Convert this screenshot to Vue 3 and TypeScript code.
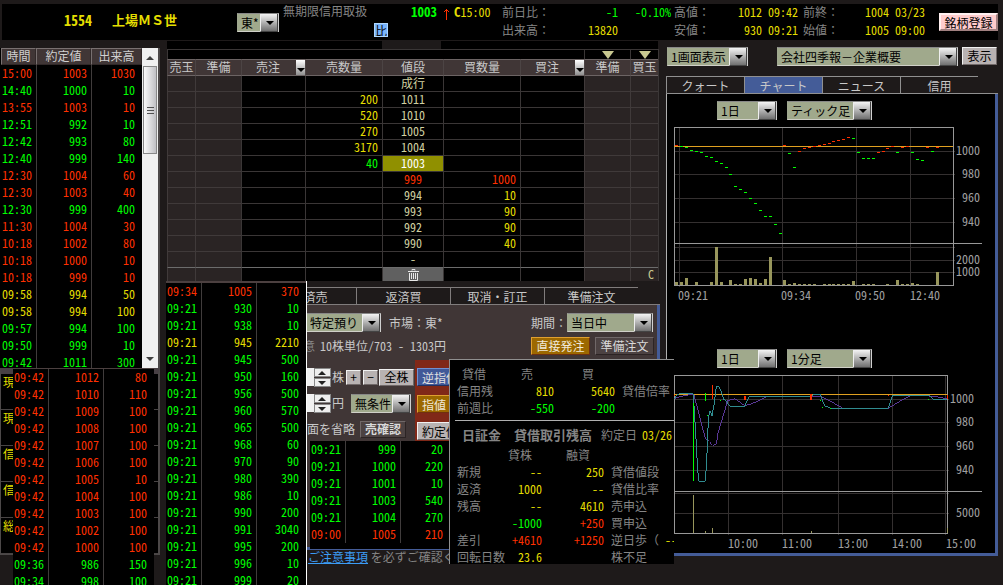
<script setup lang="ts">
import { ref } from 'vue'

type Tone = 'r' | 'g' | 'y'
type Tick = [string, string, string, Tone]

const latestTicks: Tick[] = [
  ['15:00', '1003', '1030', 'r'], ['14:40', '1000', '10', 'g'], ['13:55', '1003', '10', 'r'],
  ['12:51', '992', '10', 'g'], ['12:42', '993', '80', 'g'], ['12:40', '999', '140', 'g'],
  ['12:30', '1004', '60', 'r'], ['12:30', '1003', '40', 'r'], ['12:30', '999', '400', 'g'],
  ['11:30', '1004', '30', 'r'], ['10:18', '1002', '80', 'r'], ['10:18', '1000', '10', 'r'],
  ['10:18', '999', '10', 'r'], ['09:58', '994', '50', 'y'], ['09:58', '994', '100', 'y'],
  ['09:57', '994', '100', 'g'], ['09:50', '999', '10', 'g'], ['09:42', '1011', '300', 'g'],
]
const middleTicks: Tick[] = [
  ['09:42', '1012', '80', 'r'], ['09:42', '1010', '110', 'r'], ['09:42', '1009', '100', 'r'],
  ['09:42', '1008', '100', 'r'], ['09:42', '1007', '100', 'r'], ['09:42', '1006', '100', 'r'],
  ['09:42', '1005', '10', 'r'], ['09:42', '1004', '100', 'r'], ['09:42', '1003', '100', 'r'],
  ['09:42', '1002', '100', 'r'], ['09:42', '1000', '100', 'r'], ['09:36', '986', '150', 'g'],
  ['09:34', '998', '100', 'g'],
]
const openingTicks: Tick[] = [
  ['09:34', '1005', '370', 'r'], ['09:21', '930', '10', 'g'], ['09:21', '938', '10', 'g'],
  ['09:21', '945', '2210', 'y'], ['09:21', '945', '500', 'g'], ['09:21', '950', '160', 'g'],
  ['09:21', '956', '500', 'g'], ['09:21', '960', '570', 'g'], ['09:21', '965', '500', 'g'],
  ['09:21', '968', '60', 'g'], ['09:21', '970', '90', 'g'], ['09:21', '980', '390', 'g'],
  ['09:21', '986', '10', 'g'], ['09:21', '990', '200', 'g'], ['09:21', '991', '3040', 'g'],
  ['09:21', '995', '200', 'g'], ['09:21', '996', '10', 'g'], ['09:21', '999', '20', 'g'],
]
const firstTicks: Tick[] = [
  ['09:21', '999', '20', 'g'], ['09:21', '1000', '220', 'g'], ['09:21', '1001', '10', 'g'],
  ['09:21', '1003', '540', 'g'], ['09:21', '1004', '270', 'g'], ['09:00', '1005', '210', 'r'],
]

const holdings = ['現', '現', '信', '信', '総']

interface Level { sell: string; price: string; buy: string; sellTone?: string; tone?: string; buyTone?: string }
const levels: Level[] = [
  { sell: '', price: '成行', buy: '' },
  { sell: '200', price: '1011', buy: '' },
  { sell: '520', price: '1010', buy: '' },
  { sell: '270', price: '1005', buy: '' },
  { sell: '3170', price: '1004', buy: '' },
  { sell: '40', price: '1003', buy: '', sellTone: 'g', tone: 'now' },
  { sell: '', price: '999', buy: '1000', tone: 'r', buyTone: 'r' },
  { sell: '', price: '994', buy: '10' },
  { sell: '', price: '993', buy: '90' },
  { sell: '', price: '992', buy: '90' },
  { sell: '', price: '990', buy: '40' },
  { sell: '', price: '-', buy: '' },
]

const orderTabs = ['返済売', '返済買', '取消・訂正', '準備注文']
const infoTabs = ['クォート', 'チャート', 'ニュース', '信用']
const activeTab = ref('チャート')

const loans = [
  ['新規', '--', 'y', '250', 'y', '貸借値段'],
  ['返済', '1000', 'y', '--', 'y', '貸借比率'],
  ['残高', '--', 'y', '4610', 'y', '売申込'],
  ['', '-1000', 'g', '+250', 'r', '買申込'],
  ['差引', '+4610', 'r', '+1250', 'r', '逆日歩（'],
  ['回転日数', '23.6', 'y', '', 'y', '株不足'],
]

/* x, y and direction of each trade in the tick chart */
const trades: [number, number, 'r' | 'g'][] = [
  [8, 145, 'r'], [13, 146, 'g'], [18, 147, 'g'], [23, 150, 'g'], [28, 151, 'g'], [33, 152, 'g'],
  [38, 156, 'g'], [43, 157, 'g'], [48, 161, 'g'], [53, 163, 'g'], [58, 167, 'g'], [62, 174, 'g'],
  [67, 186, 'g'], [72, 189, 'g'], [77, 192, 'g'], [82, 198, 'g'], [87, 203, 'g'], [92, 210, 'g'],
  [97, 216, 'g'], [102, 216, 'g'], [107, 224, 'g'], [112, 233, 'g'], [116, 145, 'r'], [121, 153, 'g'],
  [126, 167, 'g'], [131, 151, 'r'], [136, 148, 'r'], [141, 147, 'r'], [146, 146, 'r'], [151, 145, 'r'],
  [156, 144, 'r'], [161, 143, 'r'], [165, 141, 'r'], [170, 140, 'r'], [175, 139, 'r'], [180, 137, 'r'],
  [185, 138, 'g'], [190, 152, 'g'], [195, 158, 'g'], [200, 158, 'g'], [205, 158, 'g'], [210, 152, 'r'],
  [215, 151, 'r'], [219, 148, 'r'], [224, 146, 'r'], [229, 152, 'g'], [234, 147, 'r'], [239, 146, 'r'],
  [244, 152, 'g'], [249, 159, 'g'], [254, 160, 'g'], [259, 147, 'r'], [264, 151, 'g'], [269, 147, 'r'],
]
/* x and height of each volume bar */
const volumes: [number, number][] = [
  [8, 3], [13, 3], [18, 7], [28, 3], [43, 3], [48, 38], [53, 3], [62, 5], [67, 1], [72, 1], [77, 6],
  [82, 7], [87, 6], [92, 2], [97, 6], [102, 28], [116, 5], [121, 1], [126, 2], [131, 1], [136, 1],
  [141, 1], [146, 1], [156, 1], [161, 1], [165, 1], [170, 1], [175, 1], [180, 1], [185, 4], [195, 1],
  [200, 1], [205, 1], [219, 1], [229, 5], [234, 1], [239, 1], [244, 2], [249, 1], [269, 13],
]
</script>

<template>
  <div class="app">
    <header class="quote">
      <h1 class="title"><span class="n">1554</span><span>上場ＭＳ世</span></h1>
      <span class="sel w-market"><select aria-label="市場"><option>東*</option></select></span>
      <div class="kind">
        <div>無期限信用取扱</div>
        <button class="compare" type="button">比</button>
      </div>
      <div class="last n">
        <b class="g">1003</b>
        <svg width="7" height="12" viewBox="0 0 7 12"><path d="M3.5 1V12M1 4L3.5 1.5L6 4" fill="none" stroke="#ff3000" /></svg>
        <span class="y"><b>C</b>15:00</span>
      </div>
      <dl class="pairs w-diff">
        <div><dt>前日比：</dt><dd class="n g">-1</dd></div>
        <div><dt>出来高：</dt><dd class="n y">13820</dd></div>
      </dl>
      <div class="ratio n g">-0.10%</div>
      <dl class="pairs w-range">
        <div><dt>高値：</dt><dd class="n y">1012 09:42</dd></div>
        <div><dt>安値：</dt><dd class="n y">930 09:21</dd></div>
      </dl>
      <dl class="pairs w-open">
        <div><dt>前終：</dt><dd class="n y">1004 03/23</dd></div>
        <div><dt>始値：</dt><dd class="n y">1005 09:00</dd></div>
      </dl>
      <button class="register" type="button">銘柄登録</button>
    </header>

    <main class="desk">
      <section class="left">
        <div class="history">
          <table class="ticks">
            <colgroup><col class="c-time"><col class="c-price"><col></colgroup>
            <thead><tr><th>時間</th><th>約定値</th><th>出来高</th></tr></thead>
            <tbody>
              <tr v-for="(t, i) in latestTicks" :key="i" :class="t[3]"><td>{{ t[0] }}</td><td>{{ t[1] }}</td><td>{{ t[2] }}</td></tr>
            </tbody>
          </table>
          <div class="scroll">
            <button type="button" aria-label="上へ"><svg width="8" height="5" viewBox="0 0 8 5"><path d="M0 5L4 1L8 5Z" fill="#404040" /></svg></button>
            <div class="thumb"><i></i><i></i><i></i></div>
            <button class="down" type="button" aria-label="下へ"><svg width="8" height="5" viewBox="0 0 8 5"><path d="M0 0L4 4L8 0Z" fill="#404040" /></svg></button>
          </div>
        </div>
        <div class="holdings">
          <ul><li v-for="(h, i) in holdings" :key="i">{{ h }}</li></ul>
          <div class="float-middle">
            <table class="ticks strip">
              <colgroup><col class="c-time"><col class="c-price"><col></colgroup>
              <tbody>
                <tr v-for="(t, i) in middleTicks" :key="i" :class="t[3]"><td>{{ t[0] }}</td><td>{{ t[1] }}</td><td>{{ t[2] }}</td></tr>
              </tbody>
            </table>
          </div>
        </div>
      </section>

      <section class="center">
        <div class="board-top"><span></span><i></i><span></span></div>
        <table class="board">
          <colgroup>
            <col class="b28"><col class="b46"><col class="b64"><col class="b77"><col class="b61"><col class="b77"><col class="b64"><col class="b46"><col class="b28">
          </colgroup>
          <thead>
            <tr class="marks">
              <td colspan="7"></td>
              <td><svg width="12" height="8" viewBox="0 0 12 8"><path d="M0 0H12L6 8Z" fill="#c8c890" /></svg></td>
              <td><svg width="12" height="8" viewBox="0 0 12 8"><path d="M0 0H12L6 8Z" fill="#c8c890" /></svg></td>
            </tr>
            <tr class="heads">
              <th>売玉</th><th>準備</th>
              <th class="drop"><div><span>売注</span><button type="button" aria-label="売注メニュー"></button></div></th>
              <th>売数量</th><th>値段</th><th>買数量</th>
              <th class="drop"><div><span>買注</span><button type="button" aria-label="買注メニュー"></button></div></th>
              <th>準備</th><th>買玉</th>
            </tr>
          </thead>
          <tbody>
            <tr v-for="(l, i) in levels" :key="i">
              <td class="side"></td><td class="side"></td><td></td>
              <td class="qty sell" :class="l.sellTone">{{ l.sell }}</td>
              <td class="price" :class="l.tone">{{ l.price }}</td>
              <td class="qty buy" :class="l.buyTone">{{ l.buy }}</td>
              <td></td><td class="side"></td><td class="side"></td>
            </tr>
            <tr class="foot">
              <td class="side"></td><td class="side"></td><td></td><td></td>
              <td class="bin">
                <svg width="11" height="12" viewBox="0 0 11 12"><path d="M4 1.5V.5H7V1.5M0 2.5H11M1.5 4V11.5H9.500V4M3.500 4V10M5.500 4V10M7.500 4V10" fill="none" stroke="#e8e8e8" /></svg>
              </td>
              <td></td><td></td><td class="side"></td><td class="side cancel">C</td>
            </tr>
          </tbody>
        </table>

        <div class="lower">
          <div class="opening">
            <table class="ticks strip">
              <colgroup><col class="c-time"><col class="c-price"><col></colgroup>
              <tbody>
                <tr v-for="(t, i) in openingTicks" :key="i" :class="t[3]"><td>{{ t[0] }}</td><td>{{ t[1] }}</td><td>{{ t[2] }}</td></tr>
              </tbody>
            </table>
          </div>

          <div class="order">
            <div class="order-clip">
              <nav class="order-tabs"><button v-for="t in orderTabs" :key="t" type="button">{{ t }}</button></nav>
              <form class="ticket" @submit.prevent>
                <div class="line first">
                  <span class="sel w-account"><select aria-label="口座"><option>特定預り</option></select></span>
                  <span>市場：東*</span>
                  <label class="push" for="term">期間：</label>
                  <span class="sel w-term"><select id="term"><option>当日中</option></select></span>
                </div>
                <div class="line second">
                  <span class="dim">意</span><span class="n">10株単位/703 - 1303円</span>
                  <button class="orange push w-act" type="button">直接発注</button>
                  <button class="brown w-act" type="button">準備注文</button>
                </div>
                <div class="entry">
                  <div class="fields">
                    <div class="line">
                      <input id="qty" class="num" type="text">
                      <span class="spin"><button type="button" aria-label="増やす"></button><button type="button" aria-label="減らす"></button></span>
                      <label for="qty">株</label>
                      <button class="grey sq" type="button">+</button>
                      <button class="grey sq" type="button">−</button>
                      <button class="grey all" type="button">全株</button>
                    </div>
                    <div class="line">
                      <input id="yen" class="num" type="text">
                      <span class="spin"><button type="button" aria-label="値上げ"></button><button type="button" aria-label="値下げ"></button></span>
                      <label for="yen">円</label>
                      <span class="sel w-cond"><select aria-label="条件"><option>無条件</option></select></span>
                    </div>
                    <div class="line">
                      <span>面を省略</span>
                      <button class="brown confirm" type="button">売確認</button>
                    </div>
                  </div>
                  <div class="kinds">
                    <button class="blue" type="button">逆指値</button>
                    <button class="orange" type="button">指値</button>
                    <button class="grey" type="button">約定値</button>
                  </div>
                </div>
              </form>
              <p class="notice"><a href="#notice">ご注意事項</a> を必ずご確認く</p>
            </div>

            <div class="float-first">
              <table class="ticks">
                <colgroup><col class="c-time"><col class="c-price"><col></colgroup>
                <tbody>
                  <tr v-for="(t, i) in firstTicks" :key="i" :class="t[3]"><td>{{ t[0] }}</td><td>{{ t[1] }}</td><td>{{ t[2] }}</td></tr>
                </tbody>
              </table>
            </div>

            <div class="credit">
              <table class="margin">
                <colgroup><col class="m1"><col class="m2"><col class="m3"><col></colgroup>
                <tbody>
                  <tr><th class="indent">貸借</th><th class="cap">売</th><th class="cap">買</th><td></td></tr>
                  <tr><th>信用残</th><td class="y">810</td><td class="y">5640</td><th>貸借倍率</th></tr>
                  <tr><th>前週比</th><td class="g">-550</td><td class="g">-200</td><td></td></tr>
                </tbody>
              </table>
              <div class="balance"><b>日証金</b><b>貸借取引残高</b><span>約定日</span><span class="n y">03/26</span></div>
              <table class="loan">
                <colgroup><col class="l1"><col class="l2"><col class="l3"><col></colgroup>
                <tbody>
                  <tr><td></td><th class="cap">貸株</th><th class="cap">融資</th><td></td></tr>
                  <tr v-for="l in loans" :key="l[5]">
                    <th>{{ l[0] }}</th><td :class="l[2]">{{ l[1] }}</td><td :class="l[4]">{{ l[3] }}</td>
                    <th>{{ l[5] }}<span v-if="l[5] === '逆日歩（'" class="n y rate">--</span></th>
                  </tr>
                </tbody>
              </table>
            </div>
          </div>
        </div>
      </section>

      <section class="right">
        <div class="pick">
          <span class="sel w-view"><select aria-label="表示画面"><option>1画面表示</option></select></span>
          <span class="sel w-report"><select aria-label="企業情報"><option>会社四季報－企業概要</option></select></span>
          <button class="grey show" type="button">表示</button>
        </div>
        <nav class="info-tabs">
          <button v-for="t in infoTabs" :key="t" type="button" :class="{ on: t === activeTab }" @click="activeTab = t">{{ t }}</button>
        </nav>
        <div class="charts">
          <div class="chart-pick">
            <span class="sel w-day"><select aria-label="期間1"><option>1日</option></select></span>
            <span class="sel w-bar"><select aria-label="足種1"><option>ティック足</option></select></span>
          </div>
          <svg class="chart" viewBox="-2 121 329 221" shape-rendering="crispEdges">
            <path class="grid" d="M11.500 127V287M114.500 127V287M188.500 127V287M242.500 127V287M6 151.500H287M6 174.500H287M6 198.500H287M6 222.500H287M6 247.500H287M6 260.500H287M6 272.500H287" />
            <path class="frame" d="M6.500 127.500H285.500V285.500H6.500ZM6 243.500H314" />
            <rect v-for="v in volumes" :key="'v' + v[0]" :x="v[0] - 1" :y="285 - v[1]" width="3" :height="v[1]" fill="#98965c" />
            <path class="base" d="M6 146.500H285" />
            <rect v-for="t in trades" :key="'t' + t[0]" :x="t[0] - 1" :y="t[1]" width="3" height="1" :class="t[2]" />
            <g class="num-end">
              <text x="312" y="155">1000</text><text x="312" y="178">980</text><text x="312" y="202">960</text><text x="312" y="226">940</text>
              <text x="312" y="264">2000</text><text x="312" y="276">1000</text>
            </g>
            <text x="10" y="300">09:21</text><text x="113" y="300">09:34</text><text x="187" y="300">09:50</text><text x="242" y="300">12:40</text>
          </svg>
          <div class="chart-pick">
            <span class="sel w-day"><select aria-label="期間2"><option>1日</option></select></span>
            <span class="sel w-bar"><select aria-label="足種2"><option>1分足</option></select></span>
          </div>
          <svg class="chart" viewBox="-2 369 329 184" shape-rendering="crispEdges">
            <path class="grid" d="M60.500 375V535M114.500 375V535M170.500 375V535M224.500 375V535M277.500 375V535M6 399.500H281M6 422.500H281M6 446.500H281M6 470.500H281M6 493.500H281M6 513.500H281" />
            <path class="frame" d="M6.500 375.500H279.500V533.500H6.500ZM6 491.500H314" />
            <path d="M25.500 495V533M37.500 531V533M44.500 528V533M143.500 531V533M279.500 528V533" stroke="#98965c" fill="none" />
            <path class="base" d="M6 394.500H279" />
            <g transform="translate(0 365) scale(0.333333)" fill="none" stroke-width="3">
              <path stroke="#5a3898" d="M18 101L40 94L60 90H78L86 120L95 154L104 190L112 220L124 230L134 241L145 237L150 205L160 170L170 138L178 108L200 101L216 112L231 122L250 117L272 107L296 95H458L490 110L525 130H660L690 112L725 93H784L810 96L838 102" />
              <path stroke="#308c90" d="M18 101L30 88L36 86H76L79 140L84 220L88 300L92 349H112L116 290L120 190L122 155L126 138L132 152L138 120L145 65H154L160 82L168 104L175 107L180 118L187 124H231L236 110L244 94H430L436 90H458L464 110L470 122L487 130H660L667 112L673 92H784L796 103H838" />
              <path stroke="#00ff00" d="M76.500 114V348M112.500 85V108M117 152H120M156 106H159M456 106H459M462 128H465M486 130H489M780 103H783" />
              <path stroke="#ff3000" d="M133.500 60V101M18 91H21M660 91H663M838 91V103" />
              <path stroke="#ff3000" stroke-width="6" d="M231 93V105M429 87V105" />
            </g>
            <g class="num-end">
              <text x="306" y="403">1000</text><text x="306" y="426">980</text><text x="306" y="450">960</text><text x="306" y="474">940</text><text x="312" y="517">5000</text>
            </g>
            <text x="60" y="548">10:00</text><text x="114" y="548">11:00</text><text x="170" y="548">13:00</text><text x="224" y="548">14:00</text><text x="278" y="548">15:00</text>
          </svg>
        </div>
      </section>
    </main>
  </div>
</template>

<style>
body {
  margin: 0;
  background: #1e1a1a;
}
</style>

<style scoped>
* { box-sizing: border-box; }
.app {
  height: 100vh;
  overflow: hidden;
  padding-top: 4px;
  background: #1e1a1a;
  color: #c8c8c8;
  font: 12px/14px "Noto Sans CJK JP", sans-serif;
  white-space: nowrap;
}
button, select, input { font: inherit; color: inherit; margin: 0; padding: 0; border-radius: 0; }
button { white-space: nowrap; overflow: hidden; }
table { border-spacing: 0; table-layout: fixed; }
th, td { padding: 0; font-weight: 400; vertical-align: top; }
svg { display: block; }
.n, .ticks td, .board td, .margin td, .loan td, .chart text { font-feature-settings: "hwid"; }
.r { color: #ff3000; fill: #ff3000; }
.g { color: #00ff00; fill: #00ff00; }
.y { color: #e4de00; }

/* drop-downs */
.sel { position: relative; display: inline-block; flex: none; height: 19px; }
.sel select {
  appearance: none;
  display: block;
  width: 100%;
  height: 19px;
  padding: 0 16px 0 3px;
  border: 1px solid;
  border-color: #888 #d0d0d0 #d0d0c8 #a0a890;
  background: #a0a98c;
  color: #000;
  line-height: 15px;
}
.sel::before, .sel::after { content: ""; position: absolute; pointer-events: none; }
.sel::before {
  top: 1px; right: 1px; width: 16px; height: 17px;
  border-left: 1px solid #eee; border-right: 1px solid #444; border-bottom: 1px solid #444;
  background: linear-gradient(#f4f4f4, #707070);
}
.sel::after { top: 8px; right: 5px; border: 4px solid transparent; border-top-color: #000; border-bottom: 0; }
.w-market { width: 42px; }
.w-account { width: 75px; }
.w-term { width: 86px; }
.w-cond { width: 60px; }
.w-view { width: 81px; }
.w-report { flex: 1; max-width: 181px; }
.w-day { width: 60px; }
.w-bar { width: 85px; }

/* buttons */
.grey { background: #b8b2b2; color: #000; border: 1px solid; border-color: #f0f0f0 #706868 #706868 #f0f0f0; }
.orange { background: #9c6800; color: #f0e8d8; border: 1px solid; border-color: #e0a030 #703010 #703010 #e0a030; }
.brown { background: #4c4242; color: #d8d8d8; border: 1px solid; border-color: #706868 #2c2424 #2c2424 #706868; }
.blue { background: #405898; color: #e0e0e0; border: 1px solid; border-color: #7090d0 #203060 #203060 #7090d0; }

/* quote bar */
.quote { display: flex; height: 36px; margin: 0 5px 1px 2px; background: #000; color: #858585; }
.title { display: flex; gap: 20px; width: 235px; margin: 0; padding: 9px 0 0 62px; color: #e4de00; font-size: 13px; line-height: 14px; }
.title .n { font-size: 14px; }
.quote .w-market { margin-top: 9px; }
.kind { width: 128px; margin-left: 4px; }
.compare { display: block; width: 14px; height: 14px; margin: 5px 0 0 91px; border: 1px solid #b0d8ff; background: #78b4fc; color: #000; line-height: 11px; }
.last { display: flex; gap: 4px; width: 91px; padding-top: 1px; }
.last b { font-size: 13px; }
.last svg { margin: 3px 0 0 2px; }
.pairs { margin: 0; }
.pairs div { display: flex; justify-content: space-between; height: 18px; line-height: 16px; }
.pairs dd { margin: 0; }
.w-diff { width: 116px; }
.ratio { width: 39px; margin-left: 17px; padding-top: 1px; overflow: hidden; }
.w-range { width: 124px; }
.w-open { width: 122px; margin-left: 5px; }
.register { align-self: center; width: 59px; height: 18px; margin-left: auto; border: 2px solid; border-color: #fff0f0 #a08080 #a08080 #fff0f0; background: #ffcccc; color: #000; line-height: 11px; }

/* main areas */
.desk { display: grid; grid-template-columns: 166px minmax(0, 494fr) minmax(0, 343fr); }
.left { padding-top: 7px; }
.center, .right { min-width: 0; }

/* tick lists */
.ticks { width: 100%; background: #000; }
.c-time { width: 35px; }
.c-price { width: 55px; }
.ticks th { height: 17px; border: 1px solid; border-color: #787070 #302828 #302828 #787070; background: #403636; line-height: 14px; color: #d0d0d0; }
.ticks td { height: 17px; line-height: 15px; padding-right: 4px; text-align: right; }
.ticks td + td { border-left: 1px solid #403c3c; }
.ticks td:first-child { padding-left: 1px; text-align: left; }
.ticks td:last-child { padding-right: 7px; }
.history { display: flex; align-items: flex-start; width: 160px; height: 320px; overflow: hidden; padding-left: 1px; border-right: 2px solid #4c4848; background: #000; }
.history .ticks { width: 141px; }
.scroll { display: flex; flex-direction: column; flex: 1; height: 320px; background: #f0f0f0; }
.scroll button { display: grid; place-items: center; height: 18px; border: 0; background: none; }
.scroll .down { margin-top: auto; }
.thumb { display: flex; flex-direction: column; justify-content: center; align-items: center; gap: 2px; height: 88px; margin: 0 1px; border: 1px solid #888; background: linear-gradient(90deg, #fafafa, #c0c0c4); }
.thumb i { width: 7px; height: 1px; background: #505050; }
.holdings { position: relative; width: 160px; border: 1px solid #4c4848; border-right-width: 2px; border-top: 6px solid #484044; background: #1e1a1a; }
.holdings ul { margin: 0; padding: 0; list-style: none; background: #000; }
.holdings li { height: 36px; padding-left: 2px; border-bottom: 1px solid #484444; color: #e4de00; line-height: 16px; }
.float-middle { position: absolute; left: 12px; top: -6px; width: 141px; background: #000; }
.strip { border-top: 2px solid #4c4040; }
.float-middle .strip { border-top-width: 1px; }

/* price board */
.board-top { display: grid; grid-template-columns: 216fr 60fr 218fr; height: 8px; padding: 0 2px 0 1px; }
.board-top span { background: #000; }
.board { width: calc(100% - 2px); margin-left: 1px; background: #000; border-right: 1px solid #3a3636; }
.b28 { width: 28px; }
.b46 { width: 46px; }
.b64 { width: 64px; }
.b77 { width: 77px; }
.b61 { width: 61px; }
.board td { height: 16px; border-left: 1px solid #3a3636; border-bottom: 1px solid #3a3636; line-height: 13px; text-align: center; }
.board .marks td { height: 10px; border-bottom: 0; border-top: 1px solid #3a3636; line-height: 8px; }
.marks svg { margin: 1px auto 0; }
.board th { height: 17px; border-top: 1px solid #6c6464; border-bottom: 1px solid #6c6464; border-left: 1px solid #4c4444; background: #403636; line-height: 13px; }
.drop div { display: flex; }
.drop span { flex: 1; padding-right: 2px; }
.drop button { position: relative; width: 9px; height: 15px; border: 0; background: linear-gradient(#fff, #909090); }
.drop button::after { content: ""; position: absolute; left: 1px; top: 8px; border: 4px solid transparent; border-top-color: #000; border-bottom: 0; }
.board .side { background: #2a2424; border-color: #403a3a; }
.board .qty { color: #e4de00; text-align: right; }
.board .qty.g { color: #00ff00; }
.board .qty.r { color: #ff3000; }
.board .sell, .board .buy { padding-right: 4px; }
.price { color: #d0d0a0; }
.price.r { color: #ff3000; }
.price.now { background: #909000; color: #fff; }
.board tr:nth-last-child(2) td { border-bottom-color: #6c6c6c; }
.board .foot td { height: 13px; border-bottom: 0; line-height: 11px; }
.board .bin { background: #606060; }
.bin svg { margin: 1px auto 0; }
.board .cancel { padding-right: 4px; text-align: right; color: #c8c890; }

/* lower windows */
.lower { display: flex; align-items: flex-start; }
.opening { flex: none; width: 141px; border-right: 1px solid #fff; background: #000; }
.order { position: relative; flex: 1; min-width: 0; }
.order-clip { overflow: hidden; padding-top: 6px; }
.order-tabs { display: flex; margin-left: -45px; border-bottom: 1px solid #807c7c; }
.order-tabs button { width: 94px; height: 17px; border: 0; border-top: 1px solid #807c7c; border-left: 1px solid #807c7c; background: #1e1a1a; line-height: 13px; }
.ticket { height: 245px; border-right: 3px solid #445c98; border-bottom: 3px solid #445c98; background: #403636; }
.line { display: flex; align-items: center; }
.push { margin-left: auto; }
.first { height: 27px; padding: 8px 4px 0 0; gap: 8px; }
.first .w-term { margin-left: -8px; }
.first .w-account { margin-left: -1px; }
.second { height: 28px; padding: 0 3px 0 0; gap: 5px; }
.dim { width: 8px; direction: rtl; overflow: hidden; color: #888; }
.w-act { width: 59px; height: 18px; line-height: 14px; }
.entry { display: flex; }
.fields { width: 108px; flex: none; padding-top: 4px; }
.fields .line { height: 26px; }
.num { width: 7px; height: 18px; border: 0; background: #f0f0f0; color: #000; flex: none; }
.spin { display: grid; flex: none; width: 17px; gap: 1px; margin-right: 1px; }
.spin button { position: relative; height: 9px; border: 1px solid #888; background: #eee; }
.spin button::after { content: ""; position: absolute; left: 3px; top: 2px; border: 4px solid transparent; border-bottom-color: #222; border-top: 0; }
.spin button + button::after { border-top: 4px solid #222; border-bottom: 0; }
.sq { flex: none; width: 15px; height: 15px; margin-left: 2px; line-height: 12px; }
.all { flex: none; width: 35px; height: 17px; margin-left: 1px; line-height: 14px; }
.w-cond { margin-left: 7px; }
.confirm { width: 46px; height: 17px; margin-left: 5px; font-weight: 700; line-height: 14px; }
.kinds { display: flex; flex-direction: column; gap: 9px; width: 40px; padding: 8px 0 3px 2px; background: #802818; }
.kinds button { height: 18px; padding-left: 4px; text-align: left; line-height: 15px; }
.notice { margin: 0; padding: 0 0 4px 1px; color: #858585; line-height: 13px; }
.notice a { color: #3c9cf4; }
.float-first { position: absolute; left: 3px; top: 160px; width: 140px; padding-bottom: 6px; background: #000; }

/* margin-trading window */
.credit { position: absolute; z-index: 2; left: 142px; top: 78px; width: 225px; height: 205px; overflow: hidden; padding-top: 6px; border-top: 1px solid #909090; border-left: 1px solid #909090; background: #000; color: #858585; }
.credit table { width: 100%; }
.credit th { height: 17px; padding-left: 7px; text-align: left; line-height: 15px; }
.credit td { height: 17px; text-align: right; line-height: 15px; }
.credit th.indent { padding-left: 12px; }
.credit th.cap { padding: 0 21px 0 0; text-align: right; }
.credit .loan th.cap { padding-right: 14px; }
.m1 { width: 54px; }
.m2 { width: 50px; }
.m3 { width: 61px; }
.l1 { width: 58px; }
.l2 { width: 34px; }
.l3 { width: 62px; }
.balance { display: flex; margin: 3px 0 0 5px; padding: 5px 0 4px 7px; border-top: 1px solid #b0b0b0; line-height: 17px; }
.balance b { margin-right: 13px; font-size: 13px; }
.balance b + b { margin-right: 9px; }
.balance .n { margin-left: 5px; }
.loan .rate { margin-left: 6px; }

/* information window */
.right { padding: 6px 5px 0 6px; }
.pick { display: flex; height: 29px; padding: 0 1px; }
.pick .w-report { margin: 0 4px 0 auto; }
.show { width: 35px; height: 18px; line-height: 14px; }
.info-tabs { display: flex; padding-right: 20px; border-bottom: 1px solid #909090; }
.info-tabs button { flex: 1; height: 17px; border: 0; border-top: 1px solid #909090; border-left: 1px solid #909090; background: none; line-height: 13px; }
.info-tabs .on { background: #445c98; }
.charts { border: 3px solid #445c98; border-width: 0 3px 3px 0; background: #000; box-shadow: inset 1px 0 #b0b0b0; }
.chart-pick { display: flex; gap: 10px; height: 27px; padding: 7px 0 0 51px; }
.chart { width: 100%; height: auto; overflow: hidden; }
.chart text { font-size: 12px; fill: #a0a0a0; }
.num-end { text-anchor: end; }
.grid { fill: none; stroke: #343030; }
.frame { fill: none; stroke: #989898; }
.base { fill: none; stroke: #e0a020; }
</style>
